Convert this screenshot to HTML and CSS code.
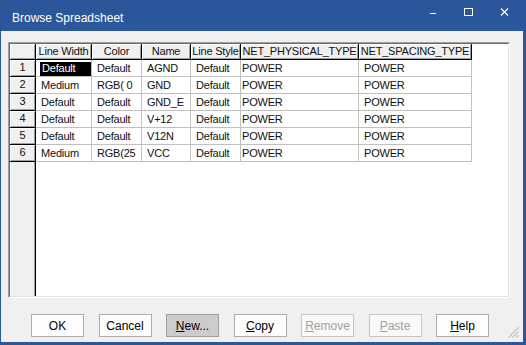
FILE: index.html
```html
<!DOCTYPE html>
<html lang="en">
<head>
    <meta charset="UTF-8">
    <title>Browse Spreadsheet</title>
    <meta name="viewport" content="width=device-width, initial-scale=1.0">
    <link rel="stylesheet" href="styles.css">
</head>
<body>
    <div class="window">
        <div class="titlebar">
            <span class="title">Browse Spreadsheet</span>
            <div class="caption-buttons">
                <span class="caption-btn">
                    <svg width="10" height="10" viewBox="0 0 10 10"><rect x="2" y="6" width="6" height="1" fill="#fff"/></svg>
                </span>
                <span class="caption-btn">
                    <svg width="10" height="10" viewBox="0 0 10 10"><rect x="0.5" y="1.5" width="8" height="7" fill="none" stroke="#fff"/></svg>
                </span>
                <span class="caption-btn">
                    <svg width="10" height="10" viewBox="0 0 10 10"><path d="M1 1.5L8 8.5M8 1.5L1 8.5" stroke="#fff" stroke-width="1.1"/></svg>
                </span>
            </div>
        </div>

        <div class="client">
            <div class="sheet">
                <div class="grid">
                    <!-- header row -->
                    <div class="cell head"></div>
                    <div class="cell head">Line Width</div>
                    <div class="cell head">Color</div>
                    <div class="cell head">Name</div>
                    <div class="cell head">Line Style</div>
                    <div class="cell head">NET_PHYSICAL_TYPE</div>
                    <div class="cell head">NET_SPACING_TYPE</div>
                    <div class="cell blank"></div>

                    <div class="cell head">1</div>
                    <div class="cell sel-cell"><span class="selected">Default</span></div>
                    <div class="cell">Default</div>
                    <div class="cell">AGND</div>
                    <div class="cell">Default</div>
                    <div class="cell tight">POWER</div>
                    <div class="cell">POWER</div>
                    <div class="cell blank"></div>

                    <div class="cell head">2</div>
                    <div class="cell">Medium</div>
                    <div class="cell">RGB( 0</div>
                    <div class="cell">GND</div>
                    <div class="cell">Default</div>
                    <div class="cell tight">POWER</div>
                    <div class="cell">POWER</div>
                    <div class="cell blank"></div>

                    <div class="cell head">3</div>
                    <div class="cell">Default</div>
                    <div class="cell">Default</div>
                    <div class="cell">GND_E</div>
                    <div class="cell">Default</div>
                    <div class="cell tight">POWER</div>
                    <div class="cell">POWER</div>
                    <div class="cell blank"></div>

                    <div class="cell head">4</div>
                    <div class="cell">Default</div>
                    <div class="cell">Default</div>
                    <div class="cell">V+12</div>
                    <div class="cell">Default</div>
                    <div class="cell tight">POWER</div>
                    <div class="cell">POWER</div>
                    <div class="cell blank"></div>

                    <div class="cell head">5</div>
                    <div class="cell">Default</div>
                    <div class="cell">Default</div>
                    <div class="cell">V12N</div>
                    <div class="cell">Default</div>
                    <div class="cell tight">POWER</div>
                    <div class="cell">POWER</div>
                    <div class="cell blank"></div>

                    <div class="cell head">6</div>
                    <div class="cell">Medium</div>
                    <div class="cell">RGB(25</div>
                    <div class="cell">VCC</div>
                    <div class="cell">Default</div>
                    <div class="cell tight">POWER</div>
                    <div class="cell">POWER</div>
                    <div class="cell blank"></div>

                    <!-- empty space below the rows -->
                    <div class="cell filler-head"></div>
                    <div class="cell filler"></div>
                </div>
            </div>

            <div class="buttons">
                <button>OK</button>
                <button>Cancel</button>
                <button class="hot"><u>N</u>ew...</button>
                <button><u>C</u>opy</button>
                <button disabled><u>R</u>emove</button>
                <button disabled><u>P</u>aste</button>
                <button><u>H</u>elp</button>
            </div>

            <div class="grip">
                <svg width="12" height="12" viewBox="0 0 12 12">
                    <path d="M11.5 1.5L1.5 11.5M11.5 5.5L5.5 11.5M11.5 9.5L9.5 11.5" stroke="#a8a8a8" stroke-width="1.2" stroke-dasharray="1.5 0.8"/>
                </svg>
            </div>
        </div>
    </div>
</body>
</html>
```

FILE: styles.css
```css
body {
    margin: 0;
    overflow: hidden;
    font-family: "Liberation Sans", Arial, sans-serif;
}
.window {
    width: 526px;
    height: 345px;
    box-sizing: border-box;
    background-color: #2b579a;
    padding: 0 3px 3px 1px;
    display: flex;
    flex-direction: column;
}
.titlebar {
    height: 31px;
    flex-shrink: 0;
    display: flex;
    justify-content: space-between;
    color: #fff;
}
.title {
    font-size: 12px;
    line-height: 16px;
    padding: 10px 0 0 11px;
}
.caption-buttons {
    display: flex;
}
.caption-btn {
    width: 36px;
    display: flex;
    justify-content: center;
    padding-top: 7px;
}
.caption-btn svg {
    display: block;
}
.client {
    flex: 1;
    position: relative;
    background-color: #f0f0f0;
    padding: 11px 0 0 7px;
}
.sheet {
    width: 502px;
    height: 256px;
    box-sizing: border-box;
    border: 1px solid;
    border-color: #a0a0a0 #ffffff #ffffff #a0a0a0;
}
.grid {
    height: 100%;
    box-sizing: border-box;
    border: 1px solid;
    border-color: #696969 #e3e3e3 #e3e3e3 #696969;
    background-color: #fff;
    display: grid;
    grid-template-columns: 26px 56px 50px 49px 50px 118px 113px 1fr;
    grid-template-rows: 16px repeat(6, 17px) 1fr;
    font-size: 11px;
    letter-spacing: -0.2px;
    color: #111;
}
.cell {
    box-sizing: border-box;
    border-right: 1px solid #c0c0c0;
    border-bottom: 1px solid #c0c0c0;
    padding-left: 5px;
    line-height: 16px;
    white-space: pre;
    overflow: hidden;
}
.cell.tight {
    padding-left: 1px;
}
.cell.head {
    background-color: #f0f0f0;
    border-color: #000;
    box-shadow: inset 1px 1px #fff, inset -1px -1px #a0a0a0;
    text-align: center;
    padding-left: 0;
    line-height: 15px;
}
.cell.blank {
    border: none;
}
.sel-cell {
    padding-left: 4px;
}
.selected {
    display: block;
    margin-top: 2px;
    height: 14px;
    line-height: 13px;
    padding-left: 2px;
    background-color: #000;
    color: #fff;
}
.filler-head {
    background-color: #f0f0f0;
    border-right: 1px solid #000;
    border-bottom: none;
    box-shadow: inset 1px 0 #fff, inset -1px 0 #a0a0a0;
}
.filler {
    grid-column: span 7;
    border: none;
}
.buttons {
    width: 458px;
    margin: 16px 0 0 23px;
    display: flex;
    justify-content: space-between;
}
button {
    width: 53px;
    height: 23px;
    box-sizing: border-box;
    padding: 0;
    border: 1px solid #adadad;
    background-color: #fdfdfd;
    color: #000;
    font-family: "Liberation Sans", Arial, sans-serif;
    font-size: 12px;
}
button.hot {
    background-color: #cccccc;
    border-color: #a0a0a0;
}
button:disabled {
    color: #a0a0a0;
    border-color: #c4c4c4;
    background-color: #f9f9f9;
}
.grip {
    position: absolute;
    right: 4px;
    bottom: 4px;
    width: 12px;
    height: 12px;
}
.grip svg {
    display: block;
}
```
